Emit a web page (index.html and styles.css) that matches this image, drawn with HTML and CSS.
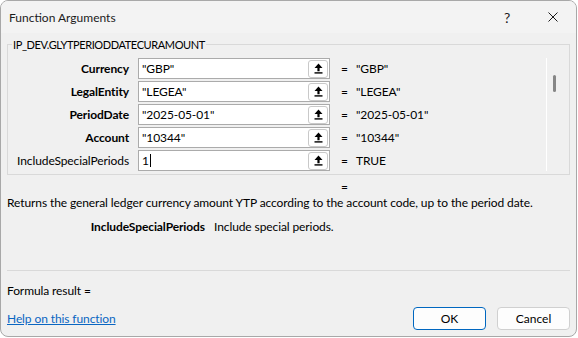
FILE: index.html
```html
<!DOCTYPE html>
<html>
<head>
<meta charset="utf-8">
<link rel="stylesheet" href="styles.css">
</head>
<body>
<div class="window">
  <div class="titlebar">
    <span class="title">Function Arguments</span>
    <span class="cap-btn help">?</span>
    <span class="cap-btn close">
      <svg width="10" height="10" viewBox="0 0 10 10"><path d="M0.5 0.5 L9.5 9.5 M9.5 0.5 L0.5 9.5" stroke="#1a1a1a" stroke-width="1" fill="none"/></svg>
    </span>
  </div>
  <div class="content">
    <fieldset class="group">
      <legend>IP_DEV.GLYTPERIODDATECURAMOUNT</legend>
      <div class="args-panel">
        <div class="args">
          <div class="arg-row">
            <span class="arg-name req">Currency</span>
            <div class="arg-input"><span class="arg-text">"GBP"</span><span class="ref-btn"><svg width="9" height="11" viewBox="0 0 9 11"><path d="M4.5 0.5 L8.5 5 L5.6 5 L5.6 8.2 L3.4 8.2 L3.4 5 L0.5 5 Z" fill="#000"/><rect x="0.5" y="9.2" width="8" height="1.4" fill="#000"/></svg></span></div>
            <span class="eq">=</span>
            <span class="arg-value">"GBP"</span>
          </div>
          <div class="arg-row">
            <span class="arg-name req">LegalEntity</span>
            <div class="arg-input"><span class="arg-text">"LEGEA"</span><span class="ref-btn"><svg width="9" height="11" viewBox="0 0 9 11"><path d="M4.5 0.5 L8.5 5 L5.6 5 L5.6 8.2 L3.4 8.2 L3.4 5 L0.5 5 Z" fill="#000"/><rect x="0.5" y="9.2" width="8" height="1.4" fill="#000"/></svg></span></div>
            <span class="eq">=</span>
            <span class="arg-value">"LEGEA"</span>
          </div>
          <div class="arg-row">
            <span class="arg-name req">PeriodDate</span>
            <div class="arg-input"><span class="arg-text">"2025-05-01"</span><span class="ref-btn"><svg width="9" height="11" viewBox="0 0 9 11"><path d="M4.5 0.5 L8.5 5 L5.6 5 L5.6 8.2 L3.4 8.2 L3.4 5 L0.5 5 Z" fill="#000"/><rect x="0.5" y="9.2" width="8" height="1.4" fill="#000"/></svg></span></div>
            <span class="eq">=</span>
            <span class="arg-value">"2025-05-01"</span>
          </div>
          <div class="arg-row">
            <span class="arg-name req">Account</span>
            <div class="arg-input"><span class="arg-text">"10344"</span><span class="ref-btn"><svg width="9" height="11" viewBox="0 0 9 11"><path d="M4.5 0.5 L8.5 5 L5.6 5 L5.6 8.2 L3.4 8.2 L3.4 5 L0.5 5 Z" fill="#000"/><rect x="0.5" y="9.2" width="8" height="1.4" fill="#000"/></svg></span></div>
            <span class="eq">=</span>
            <span class="arg-value">"10344"</span>
          </div>
          <div class="arg-row">
            <span class="arg-name">IncludeSpecialPeriods</span>
            <div class="arg-input"><span class="arg-text">1<span class="caret"></span></span><span class="ref-btn"><svg width="9" height="11" viewBox="0 0 9 11"><path d="M4.5 0.5 L8.5 5 L5.6 5 L5.6 8.2 L3.4 8.2 L3.4 5 L0.5 5 Z" fill="#000"/><rect x="0.5" y="9.2" width="8" height="1.4" fill="#000"/></svg></span></div>
            <span class="eq">=</span>
            <span class="arg-value">TRUE</span>
          </div>
        </div>
        <div class="scrollbar"><div class="thumb"></div></div>
      </div>
    </fieldset>
    <div class="result-eq">=</div>
    <p class="desc">Returns the general ledger currency amount YTP according to the account code, up to the period date.</p>
    <div class="arg-desc">
      <span class="arg-desc-name">IncludeSpecialPeriods</span>
      <span class="arg-desc-text">Include special periods.</span>
    </div>
    <div class="separator"></div>
    <div class="formula-result">Formula result =</div>
    <div class="footer">
      <a class="help-link" href="#">Help on this function</a>
      <div class="buttons">
        <button class="btn btn-default">OK</button>
        <button class="btn">Cancel</button>
      </div>
    </div>
  </div>
</div>
</body>
</html>
```
FILE: styles.css
```css
html, body {
  margin: 0;
  padding: 0;
  background: #ffffff;
}

body {
  font-family: Lato, "Noto Sans", sans-serif;
  font-size: 12px;
  letter-spacing: -0.1px;
  color: #000;
}

.window {
  width: 577px;
  height: 337px;
  box-sizing: border-box;
  border: 1px solid #a8a8a8;
  border-radius: 8px;
  background: #f0f0f0;
  display: flex;
  flex-direction: column;
  overflow: hidden;
}

.titlebar {
  height: 32px;
  flex: none;
  display: flex;
  align-items: center;
  background: #f3f3f3;
  padding-left: 8px;
}

.title {
  flex: 1;
  font-size: 12px;
  letter-spacing: 0;
  color: #1b1b1b;
}

.cap-btn {
  width: 46px;
  height: 32px;
  display: flex;
  align-items: center;
  justify-content: center;
  color: #1b1b1b;
}

.help {
  font-size: 14px;
}

.content {
  flex: 1;
  display: flex;
  flex-direction: column;
  padding: 0 6px 6px 6px;
  min-height: 0;
}

.group {
  margin: 4px 0 0 0;
  padding: 6px 6px 3px 0;
  border: 1px solid #d9d9d9;
  min-width: 0;
}

.group legend {
  margin-left: 4px;
  padding: 0 1px;
  line-height: 15px;
  font-size: 11px;
  letter-spacing: -0.4px;
}

.args-panel {
  display: flex;
  height: 113px;
}

.args {
  flex: 1;
  display: flex;
  flex-direction: column;
  gap: 2px;
}

.arg-row {
  display: flex;
  align-items: center;
  height: 21px;
}

.arg-name {
  width: 121px;
  flex: none;
  text-align: right;
  margin-right: 9px;
  white-space: nowrap;
}

.arg-name.req {
  font-weight: 700;
}

.arg-input {
  width: 192px;
  height: 21px;
  flex: none;
  box-sizing: border-box;
  border: 1px solid #ababab;
  background: #fff;
  display: flex;
  align-items: center;
  padding: 0 1px 0 3px;
}

.arg-text {
  flex: 1;
  display: flex;
  align-items: center;
}

.caret {
  display: inline-block;
  width: 1px;
  height: 13px;
  background: #000;
  margin-left: 1px;
}

.ref-btn {
  width: 20px;
  height: 18px;
  box-sizing: border-box;
  border: 1px solid #c9c9c9;
  border-radius: 3px;
  background: #fff;
  display: flex;
  align-items: center;
  justify-content: center;
}

.eq {
  width: 15px;
  flex: none;
  margin-left: 11px;
}

.arg-value {
  white-space: nowrap;
}

.scrollbar {
  width: 17px;
  flex: none;
  box-sizing: border-box;
  border-left: 1px solid #ffffff;
  padding: 17px 0 0 6px;
}

.thumb {
  width: 3px;
  height: 17px;
  border-radius: 1.5px;
  background: #868686;
}

.result-eq {
  margin: 4px 0 0 334px;
  line-height: 16px;
}

.desc {
  margin: 0;
  line-height: 16px;
}

.arg-desc {
  display: flex;
  margin-top: 8px;
  line-height: 16px;
}

.arg-desc-name {
  width: 198px;
  flex: none;
  text-align: right;
  font-weight: 700;
  margin-right: 9px;
}

.separator {
  margin-top: auto;
  height: 1px;
  background: #d9d9d9;
}

.formula-result {
  margin-top: 12px;
  line-height: 16px;
}

.footer {
  margin-top: 8px;
  display: flex;
  align-items: flex-start;
}

.help-link {
  flex: 1;
  margin-top: 4px;
  line-height: 16px;
  color: #0a66c2;
  text-decoration: underline;
}

.buttons {
  display: flex;
  gap: 11px;
}

.btn {
  width: 73px;
  height: 23px;
  box-sizing: border-box;
  border: 1px solid #d0d0d0;
  border-radius: 4px;
  background: #fdfdfd;
  font-family: inherit;
  font-size: 12px;
  letter-spacing: 0;
  color: #000;
  padding: 0;
}

.btn-default {
  border-color: #0067c0;
}
```
